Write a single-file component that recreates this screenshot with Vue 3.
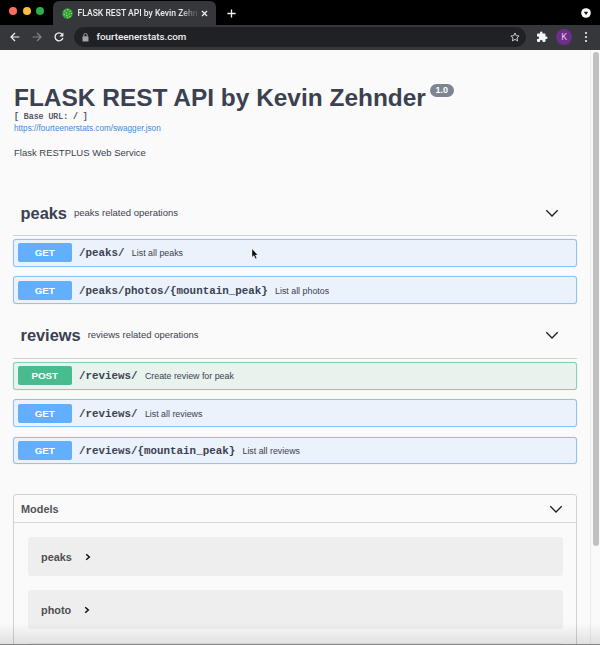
<script setup>
const sections = [
  {
    name: 'peaks',
    note: 'peaks related operations',
    ops: [
      { method: 'GET', path: '/peaks/', text: 'List all peaks' },
      { method: 'GET', path: '/peaks/photos/{mountain_peak}', text: 'List all photos' },
    ],
  },
  {
    name: 'reviews',
    note: 'reviews related operations',
    ops: [
      { method: 'POST', path: '/reviews/', text: 'Create review for peak' },
      { method: 'GET', path: '/reviews/', text: 'List all reviews' },
      { method: 'GET', path: '/reviews/{mountain_peak}', text: 'List all reviews' },
    ],
  },
]
const models = ['peaks', 'photo', '']
</script>

<template>
  <div class="window">
    <header class="tabs">
      <div class="lights"><i class="red"></i><i class="amber"></i><i class="green"></i></div>
      <div class="tab">
        <svg class="favicon" width="11" height="11" viewBox="0 0 11 11">
          <circle cx="5.5" cy="5.5" r="5.2" fill="#2ea343" />
          <path d="M2 3h1.3M5 1.6h1.3M7.4 3.3h1.4M3.7 5h1.3M6.6 6h1.3M1.5 6.6h1.3M4.2 7.6h1.3M7.3 8.5h1.2M5 9.7h1.2M9 5.5h1" stroke="#c8d34a" stroke-width="1.1" />
        </svg>
        <span class="tab-title">FLASK REST API by Kevin Zehn</span>
        <svg class="close" width="7" height="7" viewBox="0 0 7 7"><path d="M1 1l5 5M6 1L1 6" stroke="#f1f1f1" stroke-width="1.2" /></svg>
      </div>
      <svg class="plus" width="9" height="9" viewBox="0 0 9 9"><path d="M4.5 .4v8.2M.4 4.5h8.2" stroke="#f4f4f4" stroke-width="1.3" /></svg>
      <svg class="tab-search" width="10" height="10" viewBox="0 0 10 10"><circle cx="5" cy="5" r="4.8" fill="#fff" /><path d="M2.8 3.8h4.4L5 6.9z" fill="#111" /></svg>
    </header>

    <nav class="toolbar">
      <svg width="10" height="10" viewBox="0 0 10 10" fill="none" stroke="#f1f1f1" stroke-width="1.2"><path d="M9.4 5H1.2M5 1L1 5l4 4" /></svg>
      <svg class="forward" width="10" height="10" viewBox="0 0 10 10" fill="none" stroke="#85868a" stroke-width="1.2"><path d="M.6 5h8.2M5 1l4 4-4 4" /></svg>
      <svg class="reload" width="10" height="10" viewBox="0 0 10 10"><path d="M8.2 2.3A4 4 0 1 0 8.9 6" fill="none" stroke="#f1f1f1" stroke-width="1.3" /><path d="M9.4.4v4H5.4z" fill="#f1f1f1" /></svg>
      <div class="address">
        <svg width="7" height="9" viewBox="0 0 7 9"><rect x=".5" y="3.3" width="6" height="5.2" rx=".6" fill="#a0a2a7" /><path d="M1.8 3.5V2.2a1.7 1.7 0 0 1 3.4 0v1.3" fill="none" stroke="#a0a2a7" /></svg>
        <span>fourteenerstats.com</span>
        <svg class="star" width="10" height="10" viewBox="0 0 10 10"><path d="M5 1l1.2 2.7 2.9.3L7 6l.6 2.9L5 7.4 2.4 8.9 3 6 .9 4l2.9-.3z" fill="none" stroke="#d9dadc" stroke-width=".9" /></svg>
      </div>
      <svg class="puzzle" width="12" height="12" viewBox="0 0 24 24"><path d="M20.5 11H19V7a2 2 0 0 0-2-2h-4V3.500a2.500 2.500 0 0 0-5 0V5H4a2 2 0 0 0-2 2v3.800h1.500a2.700 2.700 0 0 1 0 5.400H2V20a2 2 0 0 0 2 2h3.800v-1.500a2.700 2.700 0 0 1 5.400 0V22H17a2 2 0 0 0 2-2v-4h1.500a2.500 2.500 0 0 0 0-5z" fill="#f4f4f4" /></svg>
      <span class="avatar">K</span>
      <svg class="dots" width="4" height="12" viewBox="0 0 4 12" fill="#f1f1f1"><circle cx="2" cy="2" r="1.1" /><circle cx="2" cy="6" r="1.1" /><circle cx="2" cy="10" r="1.1" /></svg>
    </nav>

    <div class="viewport">
      <main>
        <section class="info">
          <h1><span>FLASK REST API by Kevin Zehnder</span><small>1.0</small></h1>
          <pre>[ Base URL: / ]</pre>
          <a>https://fourteenerstats.com/swagger.json</a>
          <p>Flask RESTPLUS Web Service</p>
        </section>

        <section v-for="s in sections" :key="s.name" class="group" :class="s.name">
          <div class="group-head">
            <h2>{{ s.name }}</h2>
            <span>{{ s.note }}</span>
            <svg class="chevron" width="14" height="9" viewBox="0 0 14 9"><path d="M1.300 1.300L7 7l5.700-5.700" fill="none" stroke="#1c1c1c" stroke-width="1.3" /></svg>
          </div>
          <div class="ops">
            <div v-for="(op, i) in s.ops" :key="i" class="op" :class="op.method.toLowerCase()">
              <b>{{ op.method }}</b>
              <code>{{ op.path }}</code>
              <span>{{ op.text }}</span>
            </div>
          </div>
        </section>

        <section class="models">
          <div class="models-head">
            <h3>Models</h3>
            <svg class="chevron" width="14" height="9" viewBox="0 0 14 9"><path d="M1.300 1.300L7 7l5.700-5.700" fill="none" stroke="#1c1c1c" stroke-width="1.3" /></svg>
          </div>
          <div class="models-body">
            <div v-for="(m, i) in models" :key="i" class="model">
              <template v-if="m">
                <span>{{ m }}</span>
                <svg width="6" height="8" viewBox="0 0 6 8"><path d="M1.200 1.200L4.300 4 1.200 6.800" fill="none" stroke="#111" stroke-width="1.5" /></svg>
              </template>
            </div>
          </div>
        </section>
      </main>
      <div class="scrollbar"><i></i></div>
    </div>
    <div class="shade"></div>
    <svg class="cursor" width="8" height="12" viewBox="0 0 8 12"><path d="M1 .8v8.400l1.900-1.700 1.500 3.300 1.400-.6-1.400-3.200h2.400z" fill="#0b0b0b" stroke="#fff" stroke-width=".4" /></svg>
  </div>
</template>

<style>
body { margin: 0; overflow: hidden; }
</style>

<style scoped>
* { box-sizing: border-box; }
.window { position: relative; width: 600px; height: 645px; overflow: hidden; display: flex; flex-direction: column; background: #fafafa; font-family: "Liberation Sans", Arial, sans-serif; color: #3b4151; }
svg { display: block; flex: none; }
h1, h2, h3, p, pre { margin: 0; }
span, a, code, pre { white-space: nowrap; }

.tabs { flex: none; height: 25px; background: #000; display: flex; align-items: center; padding: 0 9px; }
.lights { display: flex; gap: 5.500px; width: 44px; margin-top: -4px; }
.lights i { width: 8px; height: 8px; border-radius: 50%; }
.red { background: #fe6d5f; }
.amber { background: #fdbb40; }
.green { background: #29b048; }
.tab { width: 163px; height: 24px; margin-top: 1px; border-radius: 6px 6px 0 0; background: #36373a; display: flex; align-items: center; padding: 0 8px 0 9px; }
.favicon { margin-top: 1px; }
.tab-title { width: 122px; margin-left: 4.500px; color: #eceded; font: 500 8.600px/14px Roboto, sans-serif; -webkit-mask-image: linear-gradient(90deg, #000 85%, rgba(0, 0, 0, .2) 97%); mask-image: linear-gradient(90deg, #000 85%, rgba(0, 0, 0, .2) 97%); }
.close { margin-left: 3px; }
.plus { margin-left: 11px; margin-top: 1px; }
.tab-search { margin-left: auto; margin-top: 1px; }

.toolbar { flex: none; height: 25px; background: #36373a; display: flex; align-items: center; padding: 0 12px 1px 10px; }
.forward { margin-left: 12px; }
.reload { margin-left: 12px; }
.address { width: 453px; height: 20px; margin-left: 10px; border-radius: 10px; background: #202125; display: flex; align-items: center; padding: 0 6px 0 8px; color: #f0f0f1; font: 500 9.800px/20px Roboto, sans-serif; }
.address span { margin-left: 7.500px; }
.star { margin-left: auto; }
.puzzle { margin-left: 10px; }
.avatar { width: 16px; height: 16px; margin-left: 8px; border-radius: 50%; background: #6c2f8d; color: #ecc8dc; font: 9px/16px Roboto, sans-serif; text-align: center; }
.dots { margin-left: 12px; }

.viewport { flex: 1; min-height: 0; display: flex; overflow: hidden; }
main { width: 590px; padding: 0 13px; display: flex; flex-direction: column; }
.info { flex: none; height: 142px; padding: 34px 0 0 1px; }
h1 { display: flex; align-items: flex-start; height: 28px; font-size: 24.450px; line-height: 28px; }
h1 small { margin: 0 0 0 4px; width: 24px; height: 13px; border-radius: 7px; background: #7d8492; color: #fff; font-size: 9px; line-height: 13px; text-align: center; }
pre { font: 400 8.200px/10px "Liberation Mono", monospace; height: 10px; -webkit-text-stroke: .2px #3b4151; }
.info a { display: block; height: 12px; color: #3f8ae0; font-size: 8.180px; line-height: 13px; }
.info p { margin-top: 12px; font-size: 9.500px; line-height: 14px; }

.group { flex: none; }
.group-head { height: 44px; display: flex; align-items: center; padding: 0 18px 1px 7.500px; border-bottom: 1px solid #cfd0d3; }
.reviews .group-head { height: 45px; padding-bottom: 2px; }
.reviews { margin-top: 10px; }
h2 { font-size: 16.400px; line-height: 20px; }
.group-head span { margin-left: 7px; font-size: 9.500px; line-height: 14px; }
.chevron { margin-left: auto; }
.ops { padding-top: 3px; display: flex; flex-direction: column; gap: 9.500px; }
.op { height: 27.800px; display: flex; align-items: center; padding-left: 3.500px; border: 1px solid #8fc2fb; border-radius: 3px; background: #ebf2fb; box-shadow: 0 0 1px rgba(70, 120, 180, .4); }
.op.post { border-color: #83d3b0; background: #e8f3ee; box-shadow: 0 0 1px rgba(40, 140, 90, .4); }
.op b { width: 54.500px; height: 19px; border-radius: 2px; background: #61affe; color: #fff; font-size: 9.800px; line-height: 20px; text-align: center; }
.op.post b { background: #49bb8f; }
.op code { margin-left: 7px; font: 700 10.850px/16px "Liberation Mono", monospace; padding-top: 1px; }
.op span { margin-left: 7.300px; padding-top: 1px; font-size: 8.850px; line-height: 14px; }

.models { flex: none; margin-top: 30px; border: 1px solid #d0d1d5; border-radius: 3px; height: 200px; }
.models-head { height: 28px; display: flex; align-items: center; padding: 0 13px 0 7px; border-bottom: 1px solid #d8d9dc; }
h3 { font-size: 10.900px; line-height: 14px; color: #505256; }
.models-head .chevron { margin-top: 1px; }
.models-body { padding: 14px 13px 14px 14px; display: flex; flex-direction: column; gap: 14px; }
.model { height: 39px; border-radius: 3px; background: #eee; display: flex; align-items: center; padding-left: 13px; gap: 13px; color: #505050; font-size: 10.900px; font-weight: 700; line-height: 14px; }

.scrollbar { width: 10px; border-left: 1px solid #ececec; padding: 2px 0 0 2px; background: #fafafa; }
.scrollbar i { display: block; width: 6px; height: 494px; border-radius: 3px; background: #c1c1c1; }
.shade { position: absolute; left: 0; right: 0; bottom: 0; height: 22px; background: linear-gradient(rgba(0, 0, 0, 0), rgba(0, 0, 0, .1)); border-bottom: 1px solid #858585; }
.cursor { position: absolute; left: 251px; top: 248px; }
</style>
